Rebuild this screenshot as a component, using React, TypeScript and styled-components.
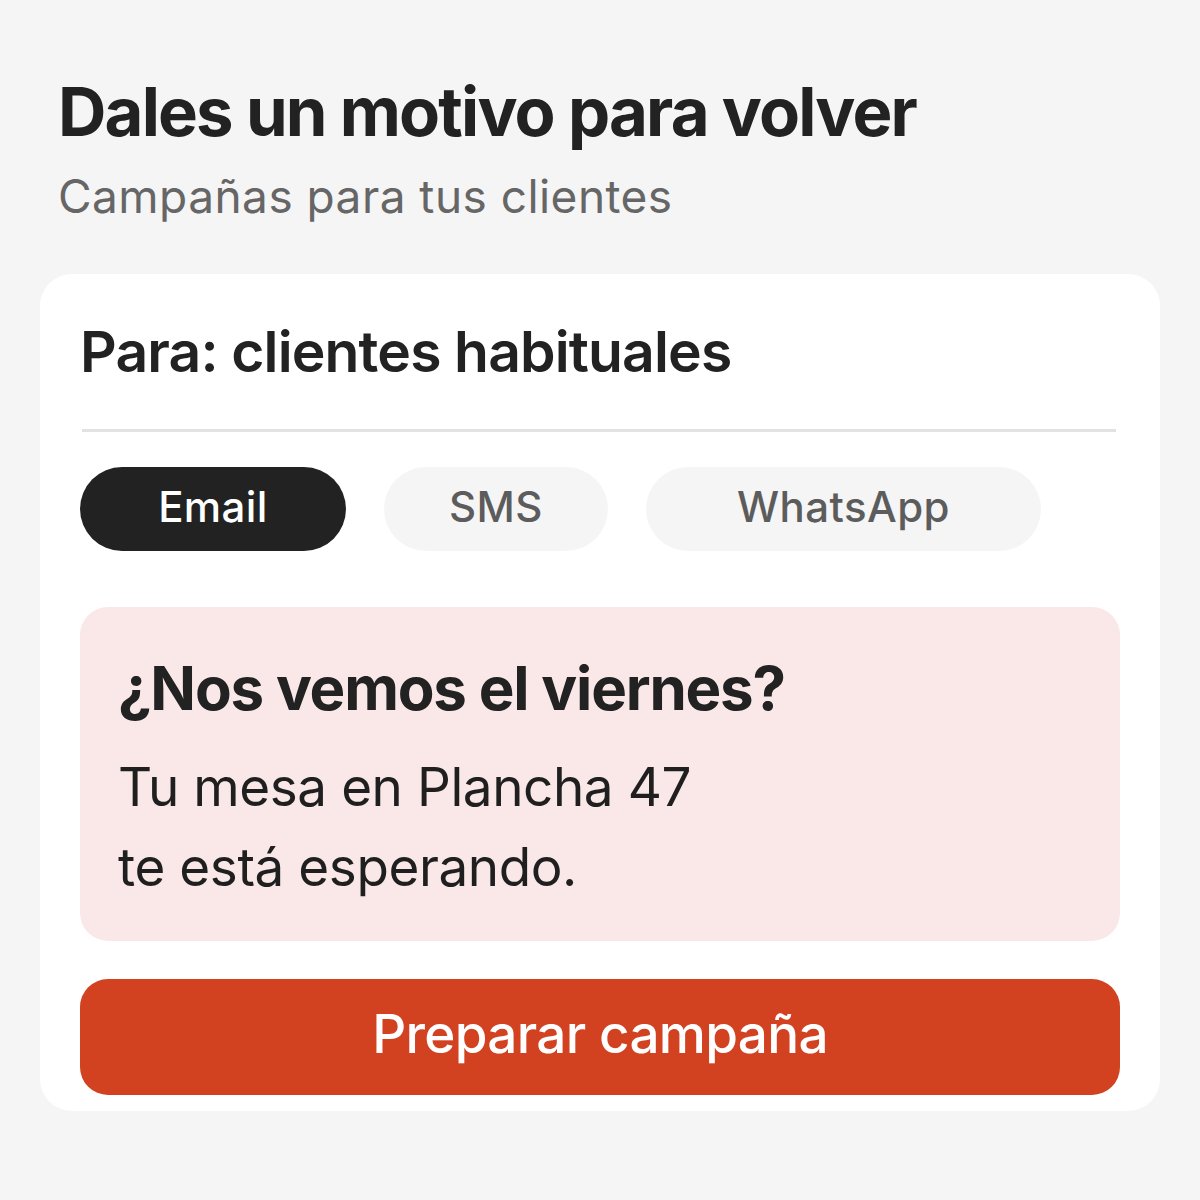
import React, { useState } from "react";
import styled, { createGlobalStyle } from "styled-components";

const GlobalStyle = createGlobalStyle`
  html, body {
    margin: 0;
    padding: 0;
    background: #f5f5f5;
  }
  body {
    font-family: Inter, "Noto Sans", sans-serif;
    color: #222;
  }
  * {
    box-sizing: border-box;
  }
`;

const Page = styled.div`
  width: 1200px;
  min-height: 1200px;
  padding: 72px 40px 40px;
  background: #f5f5f5;
`;

const Header = styled.header`
  padding: 0 18px;
  margin-bottom: 49px;
`;

const Title = styled.h1`
  margin: 0;
  font-size: 67px;
  font-weight: 700;
  letter-spacing: -0.027em;
  line-height: 1.2;
  color: #222;
`;

const Subtitle = styled.p`
  margin: 17px 0 0;
  font-size: 46px;
  font-weight: 400;
  letter-spacing: 0.01em;
  line-height: 1.2;
  color: #666;
`;

const Card = styled.section`
  background: #fff;
  border-radius: 32px;
  padding: 44px 40px 16px;
  display: flex;
  flex-direction: column;
`;

const Audience = styled.h2`
  margin: 0;
  font-size: 57px;
  font-weight: 600;
  letter-spacing: -0.015em;
  line-height: 1.2;
  color: #222;
`;

const Divider = styled.hr`
  margin: 43px 4px 0 2px;
  border: none;
  height: 3px;
  background: #e2e2e2;
`;

const Tabs = styled.div`
  display: flex;
  gap: 38px;
  margin-top: 35px;
`;

const Tab = styled.button<{ $active: boolean; $width: number }>`
  width: ${(p) => p.$width}px;
  height: 84px;
  padding: 0 0 5px;
  border: none;
  border-radius: 42px;
  font-family: inherit;
  font-size: 42px;
  font-weight: 500;
  letter-spacing: 0.01em;
  cursor: pointer;
  background: ${(p) => (p.$active ? "#222" : "#f5f5f5")};
  color: ${(p) => (p.$active ? "#fff" : "#5c5c5c")};
`;

const Preview = styled.div`
  margin-top: 56px;
  background: #fae8e8;
  border-radius: 28px;
  padding: 45px 38px 34px;
`;

const PreviewTitle = styled.h3`
  margin: 0 0 23px;
  font-size: 60px;
  font-weight: 700;
  letter-spacing: -0.02em;
  line-height: 1.2;
  color: #222;
`;

const PreviewBody = styled.p`
  margin: 0;
  font-size: 53px;
  font-weight: 400;
  letter-spacing: -0.008em;
  line-height: 80px;
  color: #1f1f1f;
`;

const CTA = styled.button`
  margin-top: 38px;
  height: 116px;
  width: 100%;
  padding: 0 0 6px;
  border: none;
  border-radius: 28px;
  background: #d24120;
  color: #fff;
  font-family: inherit;
  font-size: 53px;
  font-weight: 500;
  letter-spacing: -0.013em;
  cursor: pointer;
`;

const channels = [
  { label: "Email", width: 266 },
  { label: "SMS", width: 224 },
  { label: "WhatsApp", width: 395 },
];

export default function App() {
  const [channel, setChannel] = useState("Email");

  return (
    <>
      <GlobalStyle />
      <Page>
        <Header>
          <Title>Dales un motivo para volver</Title>
          <Subtitle>Campañas para tus clientes</Subtitle>
        </Header>
        <Card>
          <Audience>Para: clientes habituales</Audience>
          <Divider />
          <Tabs>
            {channels.map((c) => (
              <Tab
                key={c.label}
                $active={channel === c.label}
                $width={c.width}
                onClick={() => setChannel(c.label)}
              >
                {c.label}
              </Tab>
            ))}
          </Tabs>
          <Preview>
            <PreviewTitle>¿Nos vemos el viernes?</PreviewTitle>
            <PreviewBody>
              Tu mesa en Plancha 47
              <br />
              te está esperando.
            </PreviewBody>
          </Preview>
          <CTA>Preparar campaña</CTA>
        </Card>
      </Page>
    </>
  );
}
